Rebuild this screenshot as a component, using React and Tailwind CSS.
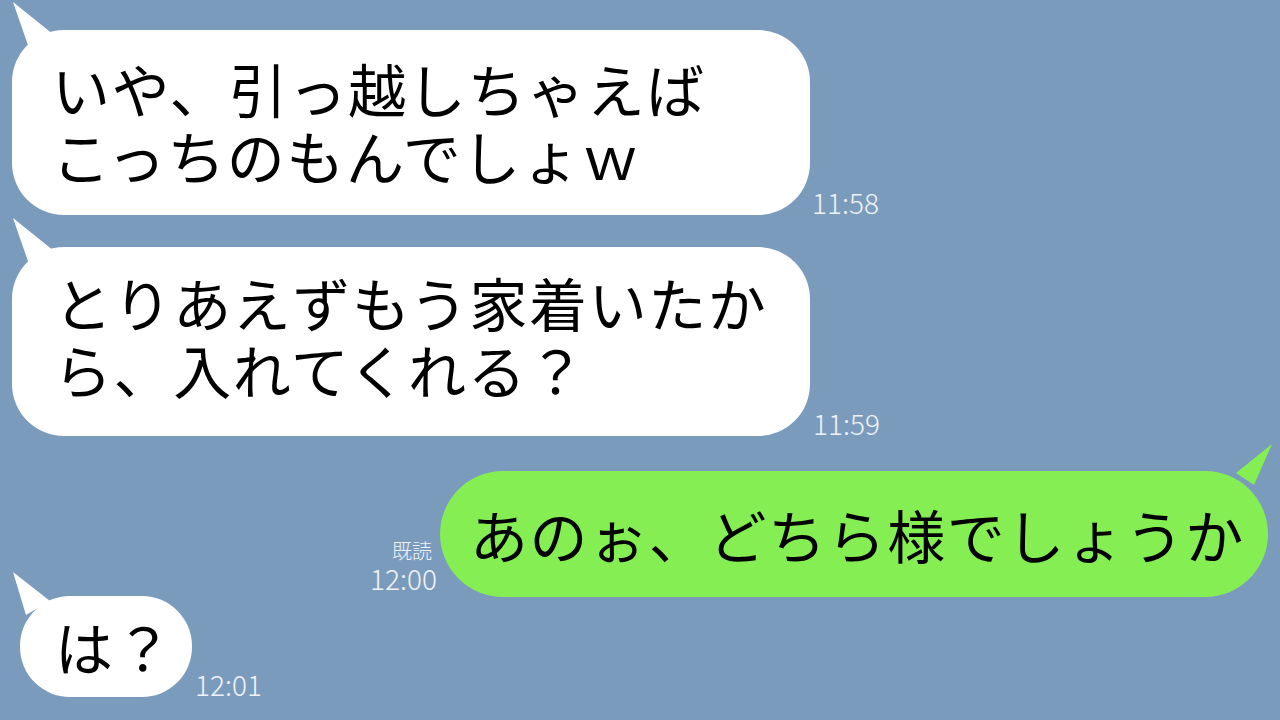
export default function App() {
  const font = { fontFamily: '"Noto Sans CJK JP", "Noto Sans", sans-serif' };
  return (
    <div
      className="w-[1280px] h-[720px] overflow-hidden bg-[#7b9bbd] text-black flex flex-col"
      style={font}
    >
      {/* message 1 */}
      <div className="flex items-end ml-[12px] mt-[30px]">
        <div className="relative w-[798px] h-[185px] rounded-[52px] bg-white pl-[40px] pt-[25px] text-[58px] leading-[67px] tracking-[1.6px]">
          <svg className="absolute left-[-2px] top-[-29px]" width="50" height="52" viewBox="0 0 50 52">
            <polygon points="3,1 44,34 20,50" fill="#ffffff" />
          </svg>
          <div className="relative">いや、引っ越しちゃえば<br />こっちのもんでしょｗ</div>
        </div>
        <div className="ml-[2px] mb-[-2px] text-[28px] leading-[30px] font-light text-[#eef3f8]">11:58</div>
      </div>

      {/* message 2 */}
      <div className="flex items-end ml-[12px] mt-[32px]">
        <div className="relative w-[798px] h-[189px] rounded-[52px] bg-white pl-[42px] pt-[22px] text-[58px] leading-[67px] tracking-[1.6px]">
          <svg className="absolute left-[-2px] top-[-30px]" width="50" height="52" viewBox="0 0 50 52">
            <polygon points="3,1 44,34 20,50" fill="#ffffff" />
          </svg>
          <div className="relative">とりあえずもう家着いたか<br />ら、入れてくれる？</div>
        </div>
        <div className="ml-[3px] mb-[-2px] text-[28px] leading-[30px] font-light text-[#eef3f8]">11:59</div>
      </div>

      {/* message 3 (mine) */}
      <div className="flex items-end justify-end mr-[12px] mt-[35px]">
        <div className="flex flex-col items-end mr-[3px] mb-[4px] text-[#eef3f8] font-light">
          <div className="text-[20px] leading-[24px] mr-[5px]">既読</div>
          <div className="text-[28px] leading-[30px]">12:00</div>
        </div>
        <div className="relative w-[828px] h-[126px] rounded-[63px] bg-[#85ee52] pl-[30px] flex items-center text-[58px] leading-[67px] tracking-[1.6px]">
          <svg className="absolute right-[-8px] top-[-28px]" width="50" height="50" viewBox="0 0 50 50">
            <polygon points="46,1 10,30 28,42" fill="#85ee52" />
          </svg>
          <div className="relative">あのぉ、どちら様でしょうか</div>
        </div>
      </div>

      {/* message 4 */}
      <div className="flex items-end ml-[20px] mt-[-1px]">
        <div className="relative w-[172px] h-[101px] rounded-[50px] bg-white pl-[35px] flex items-center text-[58px] leading-[67px] tracking-[1.6px]">
          <svg className="absolute left-[-10px] top-[-25px]" width="50" height="50" viewBox="0 0 50 50">
            <polygon points="3,1 40,30 16,44" fill="#ffffff" />
          </svg>
          <div className="relative">は？</div>
        </div>
        <div className="ml-[3px] mb-[-2px] text-[28px] leading-[30px] font-light text-[#eef3f8]">12:01</div>
      </div>
    </div>
  );
}
